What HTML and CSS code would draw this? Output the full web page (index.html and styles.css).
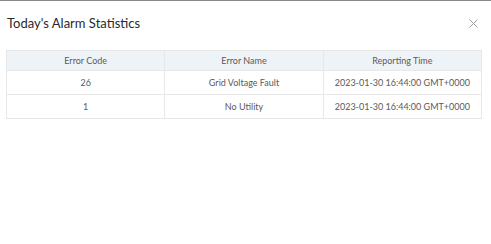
FILE: index.html
```html
<!DOCTYPE html>
<html lang="en">
<head>
    <meta charset="UTF-8">
    <title>Today's Alarm Statistics</title>
    <link rel="stylesheet" href="styles.css">
</head>
<body>
    <div class="dialog">
        <div class="dialog-header">
            <h2 class="dialog-title">Today's Alarm Statistics</h2>
            <button class="close-button" aria-label="Close">
                <svg width="9" height="9" viewBox="0 0 9 9">
                    <path d="M0.5 0.5 L8.5 8.5 M8.5 0.5 L0.5 8.5" stroke="#a0a0a0" stroke-width="1" fill="none"/>
                </svg>
            </button>
        </div>
        <table class="alarm-table">
            <thead>
                <tr>
                    <th>Error Code</th>
                    <th>Error Name</th>
                    <th>Reporting Time</th>
                </tr>
            </thead>
            <tbody>
                <tr>
                    <td>26</td>
                    <td>Grid Voltage Fault</td>
                    <td>2023-01-30 16:44:00 GMT+0000</td>
                </tr>
                <tr>
                    <td>1</td>
                    <td>No Utility</td>
                    <td>2023-01-30 16:44:00 GMT+0000</td>
                </tr>
            </tbody>
        </table>
    </div>
</body>
</html>
```

FILE: styles.css
```css
body {
    margin: 0;
    font-family: 'Lato', sans-serif;
    background: #fff;
    color: #555;
}

.dialog {
    border-top: 1px solid #8a8a8a;
    padding: 0 9px 0 6px;
}

.dialog-header {
    display: flex;
    justify-content: space-between;
    align-items: center;
    height: 44px;
    padding-left: 1px;
}

.dialog-title {
    margin: 0;
    font-size: 13px;
    font-weight: 400;
    color: #2a2a2a;
}

.close-button {
    background: none;
    border: none;
    padding: 0;
    margin-right: 4px;
    cursor: pointer;
    display: flex;
}

.alarm-table {
    width: 100%;
    margin-top: 5px;
    border-collapse: collapse;
    table-layout: fixed;
    font-size: 9px;
    text-align: center;
}

.alarm-table th,
.alarm-table td {
    border: 1px solid #e8e8e8;
    font-weight: 400;
    color: #5a5a5a;
    padding: 0;
}

.alarm-table th {
    background: #eef3f8;
    height: 19px;
}

.alarm-table td {
    height: 23px;
}
```
